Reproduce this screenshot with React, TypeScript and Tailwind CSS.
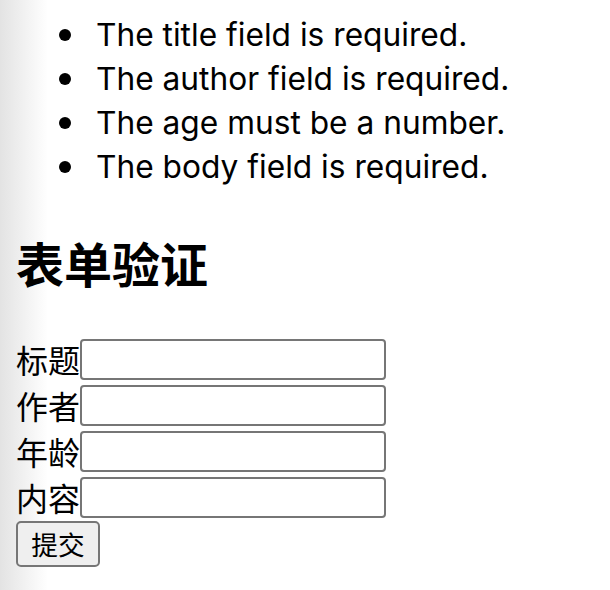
import React from 'react';

const errors = [
  'The title field is required.',
  'The author field is required.',
  'The age must be a number.',
  'The body field is required.',
];

const fields = ['标题', '作者', '年龄', '内容'];

const App: React.FC = () => {
  return (
    <div className="min-h-[590px] bg-[linear-gradient(to_right,#e3e3e3,#ffffff_48px)] px-4 pt-[13px] text-black font-['Inter','Noto_Sans_CJK_SC',sans-serif]">
      {/* error list */}
      <ul className="pl-[43px] text-[31.7px] leading-[44px]">
        {errors.map((e) => (
          <li key={e} className="flex items-center">
            <span className="mr-[25px] h-3 w-3 shrink-0 rounded-full bg-black" />
            {e}
          </li>
        ))}
      </ul>

      <h2 className="mt-10 mb-10 text-[48px] leading-[67px] font-bold font-['Noto_Sans_CJK_SC',sans-serif]">
        表单验证
      </h2>

      <form onSubmit={(ev) => ev.preventDefault()}>
        {fields.map((f) => (
          <div key={f} className="flex h-[46px] items-center">
            <label className="text-[32px] leading-none font-['Noto_Sans_CJK_SC',sans-serif]">{f}</label>
            <input
              type="text"
              className="h-[41px] w-[306px] rounded-[4px] border-2 border-[#767676] bg-white"
            />
          </div>
        ))}
        <button
          type="submit"
          className="mt-px h-[46px] w-[84px] rounded-[5px] border-2 border-[#767676] bg-[#efefef] text-[26.67px] leading-none font-['Noto_Sans_CJK_SC',sans-serif]"
        >
          提交
        </button>
      </form>
    </div>
  );
};

export default App;
